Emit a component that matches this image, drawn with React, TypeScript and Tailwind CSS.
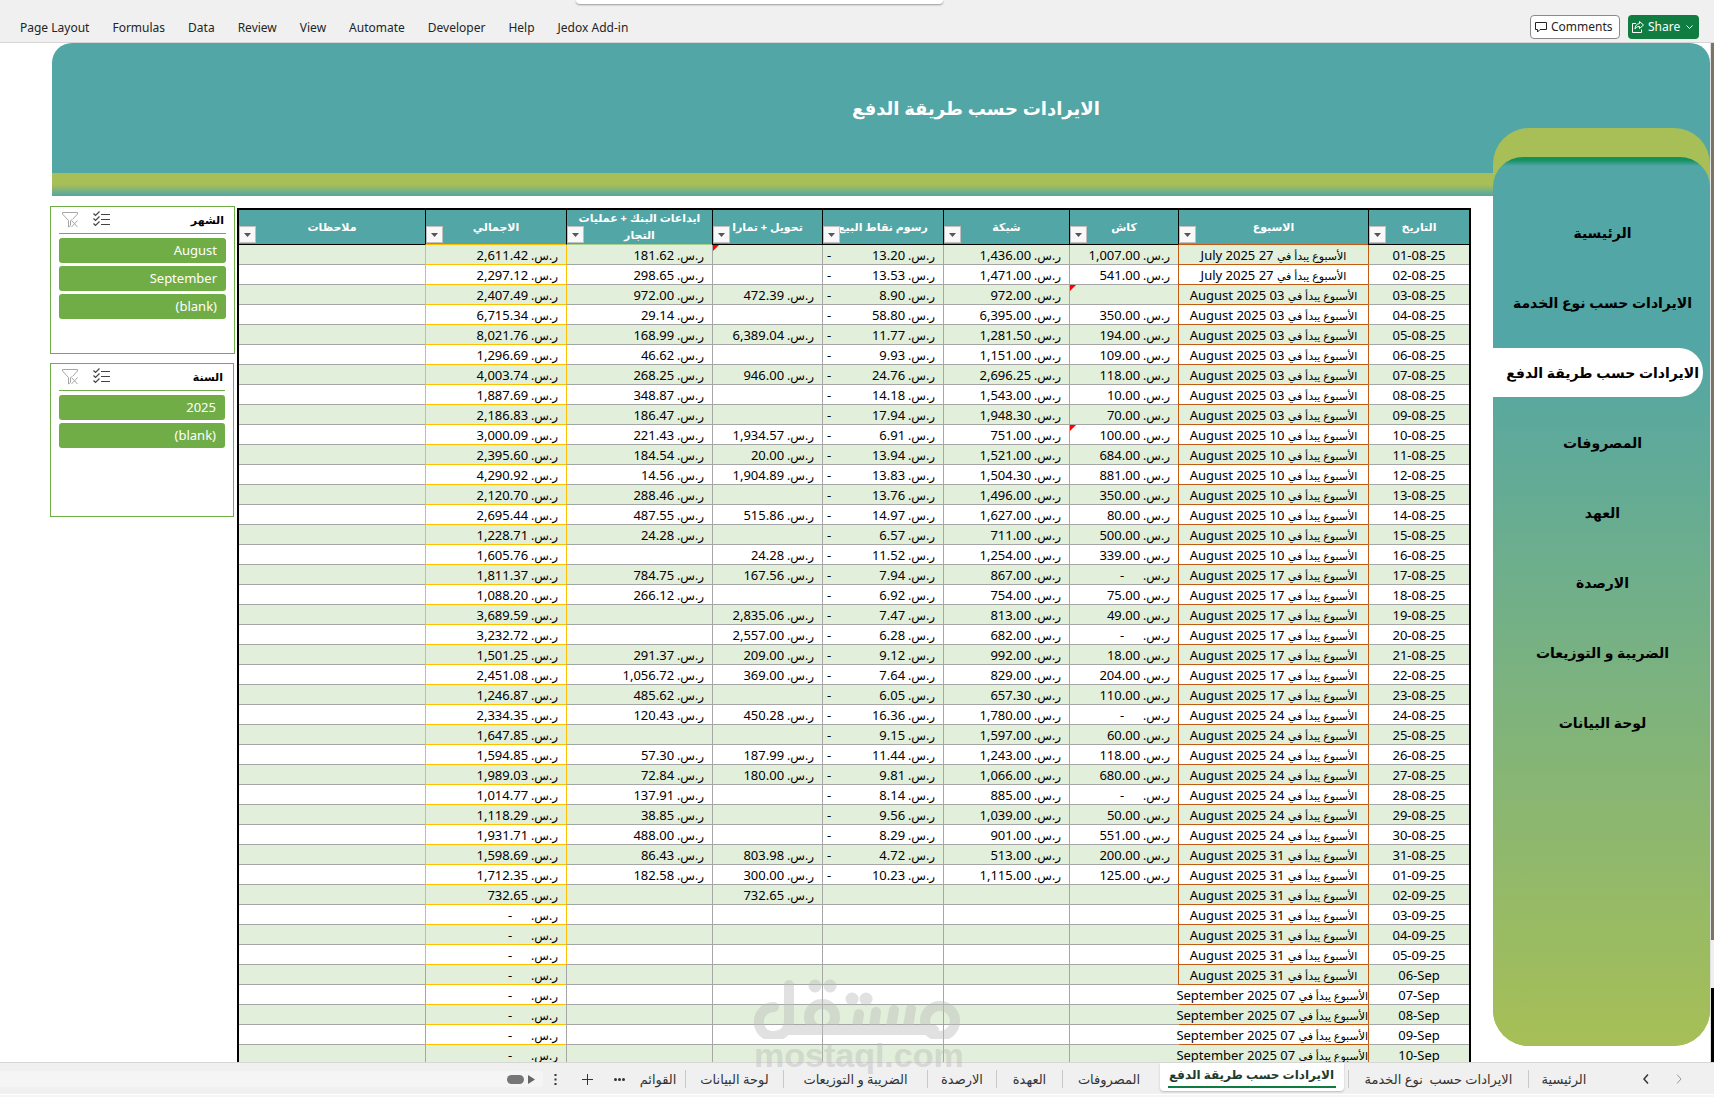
import { ReactNode } from "react";
import clsx from "clsx";

type Cell = string | null;
type Row = [string, string, Cell, Cell, Cell, Cell, Cell, string];

// date, week start, cash, network, pos fees, transfer, bank deposits, total
const rows: Row[] = [
  ["01-08-25", "27 July 2025", "1,007.00", "1,436.00", "13.20", null, "181.62", "2,611.42"],
  ["02-08-25", "27 July 2025", "541.00", "1,471.00", "13.53", null, "298.65", "2,297.12"],
  ["03-08-25", "03 August 2025", null, "972.00", "8.90", "472.39", "972.00", "2,407.49"],
  ["04-08-25", "03 August 2025", "350.00", "6,395.00", "58.80", null, "29.14", "6,715.34"],
  ["05-08-25", "03 August 2025", "194.00", "1,281.50", "11.77", "6,389.04", "168.99", "8,021.76"],
  ["06-08-25", "03 August 2025", "109.00", "1,151.00", "9.93", null, "46.62", "1,296.69"],
  ["07-08-25", "03 August 2025", "118.00", "2,696.25", "24.76", "946.00", "268.25", "4,003.74"],
  ["08-08-25", "03 August 2025", "10.00", "1,543.00", "14.18", null, "348.87", "1,887.69"],
  ["09-08-25", "03 August 2025", "70.00", "1,948.30", "17.94", null, "186.47", "2,186.83"],
  ["10-08-25", "10 August 2025", "100.00", "751.00", "6.91", "1,934.57", "221.43", "3,000.09"],
  ["11-08-25", "10 August 2025", "684.00", "1,521.00", "13.94", "20.00", "184.54", "2,395.60"],
  ["12-08-25", "10 August 2025", "881.00", "1,504.30", "13.83", "1,904.89", "14.56", "4,290.92"],
  ["13-08-25", "10 August 2025", "350.00", "1,496.00", "13.76", null, "288.46", "2,120.70"],
  ["14-08-25", "10 August 2025", "80.00", "1,627.00", "14.97", "515.86", "487.55", "2,695.44"],
  ["15-08-25", "10 August 2025", "500.00", "711.00", "6.57", null, "24.28", "1,228.71"],
  ["16-08-25", "10 August 2025", "339.00", "1,254.00", "11.52", "24.28", null, "1,605.76"],
  ["17-08-25", "17 August 2025", "-", "867.00", "7.94", "167.56", "784.75", "1,811.37"],
  ["18-08-25", "17 August 2025", "75.00", "754.00", "6.92", null, "266.12", "1,088.20"],
  ["19-08-25", "17 August 2025", "49.00", "813.00", "7.47", "2,835.06", null, "3,689.59"],
  ["20-08-25", "17 August 2025", "-", "682.00", "6.28", "2,557.00", null, "3,232.72"],
  ["21-08-25", "17 August 2025", "18.00", "992.00", "9.12", "209.00", "291.37", "1,501.25"],
  ["22-08-25", "17 August 2025", "204.00", "829.00", "7.64", "369.00", "1,056.72", "2,451.08"],
  ["23-08-25", "17 August 2025", "110.00", "657.30", "6.05", null, "485.62", "1,246.87"],
  ["24-08-25", "24 August 2025", "-", "1,780.00", "16.36", "450.28", "120.43", "2,334.35"],
  ["25-08-25", "24 August 2025", "60.00", "1,597.00", "9.15", null, null, "1,647.85"],
  ["26-08-25", "24 August 2025", "118.00", "1,243.00", "11.44", "187.99", "57.30", "1,594.85"],
  ["27-08-25", "24 August 2025", "680.00", "1,066.00", "9.81", "180.00", "72.84", "1,989.03"],
  ["28-08-25", "24 August 2025", "-", "885.00", "8.14", null, "137.91", "1,014.77"],
  ["29-08-25", "24 August 2025", "50.00", "1,039.00", "9.56", null, "38.85", "1,118.29"],
  ["30-08-25", "24 August 2025", "551.00", "901.00", "8.29", null, "488.00", "1,931.71"],
  ["31-08-25", "31 August 2025", "200.00", "513.00", "4.72", "803.98", "86.43", "1,598.69"],
  ["01-09-25", "31 August 2025", "125.00", "1,115.00", "10.23", "300.00", "182.58", "1,712.35"],
  ["02-09-25", "31 August 2025", null, null, null, "732.65", null, "732.65"],
  ["03-09-25", "31 August 2025", null, null, null, null, null, "-"],
  ["04-09-25", "31 August 2025", null, null, null, null, null, "-"],
  ["05-09-25", "31 August 2025", null, null, null, null, null, "-"],
  ["06-Sep", "31 August 2025", null, null, null, null, null, "-"],
  ["07-Sep", "07 September 2025", null, null, null, null, null, "-"],
  ["08-Sep", "07 September 2025", null, null, null, null, null, "-"],
  ["09-Sep", "07 September 2025", null, null, null, null, null, "-"],
  ["10-Sep", "07 September 2025", null, null, null, null, null, "-"],
];

const columns = [
  { title: "التاريخ", width: "w-[101px]", line: "border-b-black" },
  { title: "الاسبوع", width: "w-[190px]", line: "border-b-[#c55a11]" },
  { title: "كاش", width: "w-[109px]", line: "border-b-black" },
  { title: "شبكة", width: "w-[126px]", line: "border-b-black" },
  { title: "رسوم نقاط البيع", width: "w-[121px]", line: "border-b-black" },
  { title: "تحويل + تمارا", width: "w-[110px]", line: "border-b-black" },
  { title: "ايداعات البنك + عمليات التجار", width: "w-[146px]", line: "border-b-[#a9d08e]" },
  { title: "الاجمالي", width: "w-[141px]", line: "border-b-[#ffc000]" },
  { title: "ملاحظات", width: "w-[186px]", line: "border-b-black" },
];

const menu = ["Page Layout", "Formulas", "Data", "Review", "View", "Automate", "Developer", "Help", "Jedox Add-in"];

const navItems = [
  "الرئيسية",
  "الايرادات حسب نوع الخدمة",
  "الايرادات حسب طريقة الدفع",
  "المصروفات",
  "العهد",
  "الارصدة",
  "الضريبة و التوزيعات",
  "لوحة البيانات",
];

const sheets = [
  { title: "الرئيسية", width: "w-[71px]" },
  { title: "الايرادات حسب  نوع الخدمة", width: "w-[180px]" },
  { title: "الايرادات حسب طريقة الدفع", width: "w-[193px]", active: true },
  { title: "المصروفات", width: "w-[93px]" },
  { title: "العهدة", width: "w-[66px]" },
  { title: "الارصدة", width: "w-[69px]" },
  { title: "الضريبة و التوزيعات", width: "w-[144px]" },
  { title: "لوحة البيانات", width: "w-[98px]" },
  { title: "القوائم", width: "w-[54px]" },
];

function Money({ value, negative }: { value: Cell; negative?: boolean }) {
  if (value === null) return null;
  return (
    <div className="flex items-center justify-between pr-2 pl-1">
      <span className="flex items-center gap-[3px]">
        <span className="text-[12px]">ر.س.</span>
        <span className={value === "-" ? "pr-4" : ""}>{value}</span>
      </span>
      {negative && <span>-</span>}
    </div>
  );
}

function NoteMark() {
  return (
    <svg className="absolute top-0 left-0 size-[6px]" viewBox="0 0 6 6" aria-hidden="true">
      <path d="M0 0h6L0 6z" fill="#f00" />
    </svg>
  );
}

function Td({ children, className }: { children?: ReactNode; className?: string }) {
  return (
    <td className={clsx("relative h-5 border-b border-l p-0 pt-0.5 leading-[17px] whitespace-nowrap", className)}>
      {children}
    </td>
  );
}

function DataRow({ row, index }: { row: Row; index: number }) {
  const [date, week, cash, network, fees, transfer, bank, total] = row;
  const long = week.includes("September");
  const gray = "border-[#a6a6a6]";
  const totalSide = index < 36 ? "border-l-[#ffc000]" : "border-l-[#a6a6a6]";
  return (
    <tr className={index % 2 === 0 ? "bg-[#e2efda]" : "bg-white"}>
      <Td className="border-b-[#a6a6a6] border-l-[#c55a11] text-center">
        <span dir="ltr">{date}</span>
      </Td>
      <Td className={clsx("border-b-[#c55a11] text-center", long ? "border-l-transparent" : "border-l-[#c55a11]")}>
        <span className="text-[11px]">الأسبوع يبدأ في</span> {week}
      </Td>
      <Td className={gray}>
        <Money value={cash} />
        {(index === 2 || index === 9) && <NoteMark />}
      </Td>
      <Td className={gray}>
        <Money value={network} />
      </Td>
      <Td className={gray}>
        <Money value={fees} negative />
      </Td>
      <Td className={gray}>
        <Money value={transfer} />
        {index === 0 && <NoteMark />}
      </Td>
      <Td className={clsx("border-b-[#a6a6a6]", totalSide)}>
        <Money value={bank} />
      </Td>
      <Td className={clsx("border-b-[#ffc000]", totalSide)}>
        <Money value={total} />
      </Td>
      <td className="h-5 border-b border-[#a6a6a6] p-0" />
    </tr>
  );
}

function RevenueTable() {
  return (
    <table
      dir="rtl"
      className="w-full table-fixed border-separate border-spacing-0 border-x-2 border-t-2 border-black text-[13px]"
    >
      <thead>
        <tr>
          {columns.map((col, i) => (
            <th
              key={col.title}
              className={clsx(
                "relative h-[35px] border-b bg-[#52a6a6] p-0 text-[11px] leading-[17px] font-bold text-white",
                i < columns.length - 1 && "border-l border-l-black",
                col.width,
                col.line,
              )}
            >
              <div className="flex h-[34px] items-center justify-center px-1 pb-0.5">{col.title}</div>
              <button
                type="button"
                aria-label={`تصفية ${col.title}`}
                className="absolute bottom-px left-0 flex size-[17px] items-center justify-center border border-[#c0c0c0] bg-[#f8f8f8]"
              >
                <svg className="h-1 w-[7px]" viewBox="0 0 7 4" aria-hidden="true">
                  <path d="M0 0h7L3.500 4z" fill="#555" />
                </svg>
              </button>
            </th>
          ))}
        </tr>
      </thead>
      <tbody>
        {rows.map((row, i) => (
          <DataRow key={row[0]} row={row} index={i} />
        ))}
      </tbody>
    </table>
  );
}

function Slicer({ title, items, className }: { title: string; items: string[]; className: string }) {
  return (
    <section className={clsx("border border-[#70ad47] bg-white px-2 pt-1", className)}>
      <div className="flex h-[23px] items-start border-b border-[#70ad47] pr-0.5 pl-[3px]">
        <button type="button" aria-label="مسح التصفية">
          <svg className="size-[17px]" viewBox="0 0 17 17" fill="none" stroke="#a6a6a6" aria-hidden="true">
            <path d="M.5 1.500v1.500l6 6.500v6.500l2-1.500v-5l1-1M.5 1.500h15V3l-5 5.500" />
            <path d="M9.500 9.500l6 6.500M15.500 9.500l-6 6.500" />
          </svg>
        </button>
        <button type="button" aria-label="تحديد متعدد" className="ml-[14px]">
          <svg className="size-[17px]" viewBox="0 0 17 17" fill="none" stroke="#444" aria-hidden="true">
            <path d="M8 3.500h9M8 8.500h9M8 13.500h9" />
            <path d="M.5 2.500l2 2 4-4M.5 7.500l2 2 4-4M.5 12.500l2 2 4-4" strokeWidth="1.200" />
          </svg>
        </button>
        <h2 className="ml-auto text-[11px] leading-[17px] font-bold">{title}</h2>
      </div>
      <div className="mt-1 flex flex-col gap-[3px]">
        {items.map((item) => (
          <button
            key={item}
            type="button"
            className="h-[25px] rounded-[3px] bg-[#70ad47] pr-[9px] pb-0.5 text-right text-[13px] leading-5 text-white"
          >
            {item}
          </button>
        ))}
      </div>
    </section>
  );
}

function Ribbon() {
  return (
    <header className="relative flex h-[43px] shrink-0 items-center border-b border-[#d6d6d6] bg-[#f0f0f0] pt-3 pr-[15px] pl-5">
      <div className="absolute top-0 left-[576px] h-1 w-[367px] rounded-b bg-white shadow-[0_1px_2px_#999]" />
      <nav className="flex gap-[23px] pt-0.5 text-[12px] leading-5 text-[#242424]">
        {menu.map((item) => (
          <a key={item} href="#">
            {item}
          </a>
        ))}
      </nav>
      <div className="ml-auto flex gap-2 text-[12px] leading-5">
        <button
          type="button"
          className="flex h-6 w-[90px] items-center gap-1 rounded border border-[#8a8a8a] bg-white pl-1 text-[#242424]"
        >
          <svg className="size-3" viewBox="0 0 12 12" fill="none" stroke="#242424" aria-hidden="true">
            <path d="M.5 1.500h11v7H5l-2.500 2.500V8.500h-2z" />
          </svg>
          Comments
        </button>
        <button
          type="button"
          className="flex h-6 w-[71px] items-center gap-1 rounded bg-[#107c41] pl-1 text-white"
        >
          <svg className="size-3" viewBox="0 0 12 12" fill="none" stroke="#fff" aria-hidden="true">
            <path d="M4 2.500H.5v9h9V8.500M7.500.5l4 3.500-4 3.500V5.500C5 5.500 4 6.500 3 8c0-3 1.500-5 4.500-5.500z" />
          </svg>
          Share
          <svg className="ml-0.5 h-1 w-[7px]" viewBox="0 0 7 4" fill="none" stroke="#fff" aria-hidden="true">
            <path d="M.5.5l3 3 3-3" />
          </svg>
        </button>
      </div>
    </header>
  );
}

function SideNav() {
  return (
    <div className="-mt-[68px] h-[918px] w-[217px] shrink-0 rounded-t-[36px] rounded-b-[36px] bg-[#a7bf56] pt-[29px]">
      <nav
        dir="rtl"
        className="flex h-full flex-col rounded-[30px] rounded-b-[36px] bg-[linear-gradient(#12915f_0px,#12915f_3px,#52a6a6_9px,#52a6a6_180px,#a7bf56_100%)] pt-[51px]"
      >
        {navItems.map((item) => (
          <a
            key={item}
            href="#"
            className={clsx(
              "mb-[21px] flex h-[49px] items-center text-[14px] leading-6 font-bold whitespace-nowrap text-black",
              item === "الايرادات حسب طريقة الدفع"
                ? "mr-[7px] rounded-r-[24px] bg-white pr-1"
                : "justify-center pl-0.5",
            )}
          >
            {item}
          </a>
        ))}
      </nav>
    </div>
  );
}

function SheetTabs() {
  return (
    <footer
      dir="rtl"
      className="relative flex h-[35px] shrink-0 items-start border-t border-[#d6d6d6] bg-[#f0f0f0] pr-[24px] text-[13px] text-[#333]"
    >
      <button type="button" aria-label="التالي" className="flex h-8 w-[22px] items-center justify-center">
        <svg className="h-[10px] w-[6px]" viewBox="0 0 6 10" fill="none" stroke="#999" aria-hidden="true">
          <path d="M1 .5l4 4.500-4 4.500" />
        </svg>
      </button>
      <button type="button" aria-label="السابق" className="mr-[11px] flex h-8 w-[22px] items-center justify-center">
        <svg className="h-[10px] w-[6px]" viewBox="0 0 6 10" fill="none" stroke="#333" strokeWidth="1.500" aria-hidden="true">
          <path d="M5 .5L1 5l4 4.500" />
        </svg>
      </button>
      <div className="mr-9 flex">
        {sheets.map((sheet) =>
          sheet.active ? (
            <div key={sheet.title} className={clsx("flex justify-center", sheet.width)}>
              <a
                href="#"
                aria-current="page"
                className="flex h-[28px] w-[184px] justify-center rounded-b bg-white px-2 text-[12px] font-bold text-[#1f3d2c] shadow-[0_1px_2px_#bbb]"
              >
                <span className="h-[25px] w-full border-b-2 border-[#107c41] text-center leading-6 whitespace-nowrap">
                  {sheet.title}
                </span>
              </a>
            </div>
          ) : (
            <div key={sheet.title} className={clsx("flex h-8 items-center justify-center", sheet.width)}>
              <a href="#" className="flex-1 text-center leading-6 whitespace-pre">
                {sheet.title}
              </a>
              {sheet.title !== "القوائم" && <span className="h-[18px] w-px bg-[#c8c8c8]" />}
            </div>
          ),
        )}
      </div>
      <button type="button" aria-label="كل الأوراق" className="flex h-8 w-6 items-center justify-center">
        <svg className="h-[3px] w-[11px]" viewBox="0 0 11 3" fill="#333" aria-hidden="true">
          <circle cx="1.500" cy="1.500" r="1.500" />
          <circle cx="5.500" cy="1.500" r="1.500" />
          <circle cx="9.500" cy="1.500" r="1.500" />
        </svg>
      </button>
      <button type="button" aria-label="ورقة جديدة" className="mr-2 flex h-8 w-6 items-center justify-center">
        <svg className="size-[11px]" viewBox="0 0 11 11" stroke="#333" aria-hidden="true">
          <path d="M5.500 0v11M0 5.500h11" />
        </svg>
      </button>
      <button type="button" aria-label="المزيد" className="mr-2 flex h-8 w-6 items-center justify-center">
        <svg className="h-[11px] w-[3px]" viewBox="0 0 3 11" fill="#333" aria-hidden="true">
          <path d="M.5 0h2v2h-2zM.5 4.500h2v2h-2zM.5 9h2v2h-2z" />
        </svg>
      </button>
      <div className="mt-2 flex h-4 flex-1 items-center gap-1 rounded-r bg-[#f5f5f5] pr-2">
        <svg className="h-[9px] w-[7px]" viewBox="0 0 7 9" fill="#666" aria-hidden="true">
          <path d="M0 0l7 4.500L0 9z" />
        </svg>
        <span className="h-[9px] w-[17px] rounded-full bg-[#767676]" />
      </div>
      <div className="absolute inset-x-0 bottom-0 h-[3px] border-t border-white bg-[#f5f5f5]" />
    </footer>
  );
}

function Watermark() {
  return (
    <div className="pointer-events-none absolute bottom-[26px] left-[754px] z-10 w-[206px] text-[#bdbdbd] opacity-45">
      <svg
        className="h-[62px] w-[206px]"
        viewBox="0 0 206 62"
        fill="none"
        stroke="currentColor"
        strokeWidth="10"
        strokeLinecap="round"
        aria-hidden="true"
      >
        <path d="M20 30C0 30 0 59 19 59c11 0 16-7 16-16V8M33 53h147" />
        <circle cx="68" cy="40" r="13" />
        <circle cx="186" cy="44" r="15" />
        <path d="M103 50l2-13M120 50l2-15M137 50l3-17M154 50l3-18" />
        <path d="M61 9h.1M76 9h.1M98 22h.1M112 22h.1" strokeWidth="13" />
      </svg>
      <p className="text-center font-['Liberation_Sans'] text-[34px] leading-8 font-bold">mostaql.com</p>
    </div>
  );
}

export default function App() {
  return (
    <div className="relative flex h-screen flex-col overflow-hidden bg-white font-['Noto_Sans','DejaVu_Sans',sans-serif] text-black">
      <Ribbon />
      <main className="flex min-h-0 flex-1 overflow-hidden">
        <div className="flex min-w-0 flex-1 flex-col">
          <div className="ml-[52px] flex h-[153px] shrink-0 flex-col overflow-hidden rounded-t-[20px] bg-[#52a6a6]">
            <h1 dir="rtl" className="flex h-[130px] items-center justify-center pl-[190px] text-[18px] leading-8 font-bold text-white">
              الايرادات حسب طريقة الدفع
            </h1>
            <div className="h-[23px] bg-[linear-gradient(#a7bf56_50%,#52a6a6)]" />
          </div>
          <div className="flex">
            <aside className="mt-[10px] ml-[50px] flex w-[187px] shrink-0 flex-col gap-[9px]">
              <Slicer title="الشهر" items={["August", "September", "(blank)"]} className="mr-0.5 h-[148px]" />
              <Slicer title="السنة" items={["2025", "(blank)"]} className="mr-[3px] h-[154px]" />
            </aside>
            <div className="mt-[12px] mr-[22px] min-w-0 flex-1 pr-[3px]">
              <RevenueTable />
            </div>
            <SideNav />
          </div>
        </div>
        <div className="flex w-1 shrink-0 flex-col border-l border-[#e0e0e0]">
          <div className="h-[897px] bg-[#7d7365]" />
          <div className="h-12 bg-[#f0f0f0]" />
          <div className="flex-1 bg-black" />
        </div>
      </main>
      <Watermark />
      <SheetTabs />
    </div>
  );
}
